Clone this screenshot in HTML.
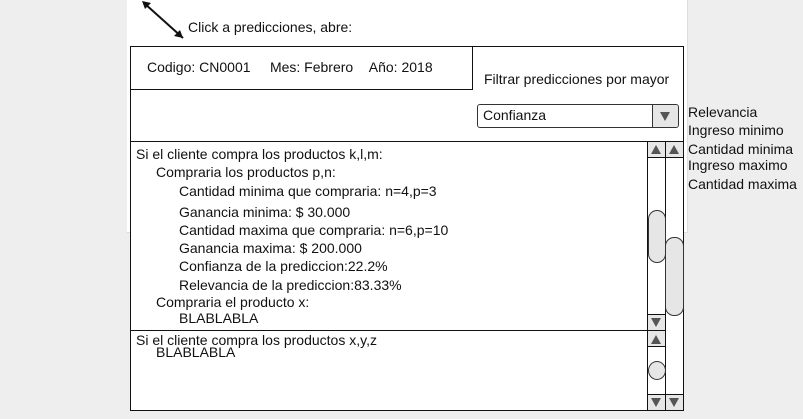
<!DOCTYPE html>
<html><head><meta charset="utf-8"><style>
body{margin:0;width:803px;height:419px;background:#eeeeee;position:relative;overflow:hidden;font-family:"Liberation Sans",sans-serif;font-size:14px;color:#111}
.a{position:absolute;white-space:nowrap}
.b{position:absolute;box-sizing:border-box}
.up,.dn{position:absolute;width:0;height:0;border-left:5px solid transparent;border-right:5px solid transparent}
.up{border-bottom:9px solid #555}.dn{border-top:9px solid #555}
.btn{position:absolute;background:#e6e6e6;box-sizing:border-box}
</style></head><body>
<div class="b" style="left:127px;top:0;width:561px;height:233px;background:#fff;border-right:1px solid #ddd;border-bottom:1px solid #ddd"></div>
<svg class="b" style="left:138px;top:0" width="50" height="42"><line x1="6" y1="3" x2="45" y2="38" stroke="#111" stroke-width="2"/><polygon points="45,38 36,36 42,30" fill="#111"/><polygon points="4,1 13,3 7,9" fill="#111"/></svg>
<div class="a" style="left:188px;top:19px">Click a predicciones, abre:</div>
<div class="b" style="left:130px;top:46px;width:554px;height:365px;background:#fff;border:1px solid #111"></div>
<div class="b" style="left:130px;top:46px;width:343px;height:44px;border:1px solid #111"></div>
<div class="a" style="left:147px;top:59px">Codigo: CN0001&nbsp;&nbsp;&nbsp;&nbsp;&nbsp;Mes: Febrero&nbsp;&nbsp;&nbsp;&nbsp;Año: 2018</div>
<div class="a" style="left:484px;top:71px">Filtrar predicciones por mayor</div>
<div class="b" style="left:477px;top:104px;width:202px;height:24px;border:1px solid #333;border-radius:3px;background:#fff"></div>
<div class="btn" style="left:652px;top:105px;width:26px;height:22px;border-left:1px solid #333;border-radius:0 3px 3px 0"></div>
<div class="dn" style="left:660px;top:112px"></div>
<div class="a" style="left:483px;top:107px">Confianza</div>
<div class="b" style="left:130px;top:141px;width:554px;height:1px;background:#111"></div>
<div class="b" style="left:130px;top:330px;width:536px;height:1px;background:#111"></div>
<div class="b" style="left:647px;top:141px;width:1px;height:270px;background:#111"></div>
<div class="b" style="left:665px;top:141px;width:1px;height:270px;background:#111"></div>
<div class="btn" style="left:648px;top:142px;width:17px;height:16px;border-bottom:1px solid #111"></div><div class="up" style="left:651px;top:145px"></div>
<div class="btn" style="left:666px;top:142px;width:17px;height:16px;border-bottom:1px solid #111"></div><div class="up" style="left:669px;top:145px"></div>
<div class="btn" style="left:648px;top:314px;width:17px;height:16px;border-top:1px solid #111"></div><div class="dn" style="left:651px;top:318px"></div>
<div class="b" style="left:648px;top:210px;width:18px;height:53px;background:#e6e6e6;border:1px solid #333;border-radius:9px"></div>
<div class="b" style="left:665px;top:237px;width:19px;height:79px;background:#e6e6e6;border:1px solid #333;border-radius:9px"></div>
<div class="btn" style="left:648px;top:331px;width:17px;height:16px;border-bottom:1px solid #111"></div><div class="up" style="left:651px;top:335px"></div>
<div class="b" style="left:648px;top:361px;width:18px;height:19px;background:#e6e6e6;border:1px solid #333;border-radius:50%"></div>
<div class="btn" style="left:648px;top:394px;width:17px;height:16px;border-top:1px solid #111"></div><div class="dn" style="left:651px;top:398px"></div>
<div class="btn" style="left:666px;top:394px;width:17px;height:16px;border-top:1px solid #111"></div><div class="dn" style="left:669px;top:398px"></div>
<div class="a" style="left:136px;top:146px">Si el cliente compra los productos k,l,m:</div>
<div class="a" style="left:156px;top:164px">Compraria los productos p,n:</div>
<div class="a" style="left:179px;top:183px">Cantidad minima que compraria: n=4,p=3</div>
<div class="a" style="left:179px;top:204px">Ganancia minima: $ 30.000</div>
<div class="a" style="left:179px;top:222px">Cantidad maxima que compraria: n=6,p=10</div>
<div class="a" style="left:179px;top:240px">Ganancia maxima: $ 200.000</div>
<div class="a" style="left:179px;top:258px">Confianza de la prediccion:22.2%</div>
<div class="a" style="left:179px;top:277px">Relevancia de la prediccion:83.33%</div>
<div class="a" style="left:156px;top:294px">Compraria el producto x:</div>
<div class="a" style="left:179px;top:310px">BLABLABLA</div>
<div class="a" style="left:136px;top:332px">Si el cliente compra los productos x,y,z</div>
<div class="a" style="left:156px;top:344px">BLABLABLA</div>
<div class="a" style="left:688px;top:104px">Relevancia</div>
<div class="a" style="left:688px;top:122px">Ingreso minimo</div>
<div class="a" style="left:688px;top:141px">Cantidad minima</div>
<div class="a" style="left:688px;top:157px">Ingreso maximo</div>
<div class="a" style="left:688px;top:176px">Cantidad maxima</div>
</body></html>
